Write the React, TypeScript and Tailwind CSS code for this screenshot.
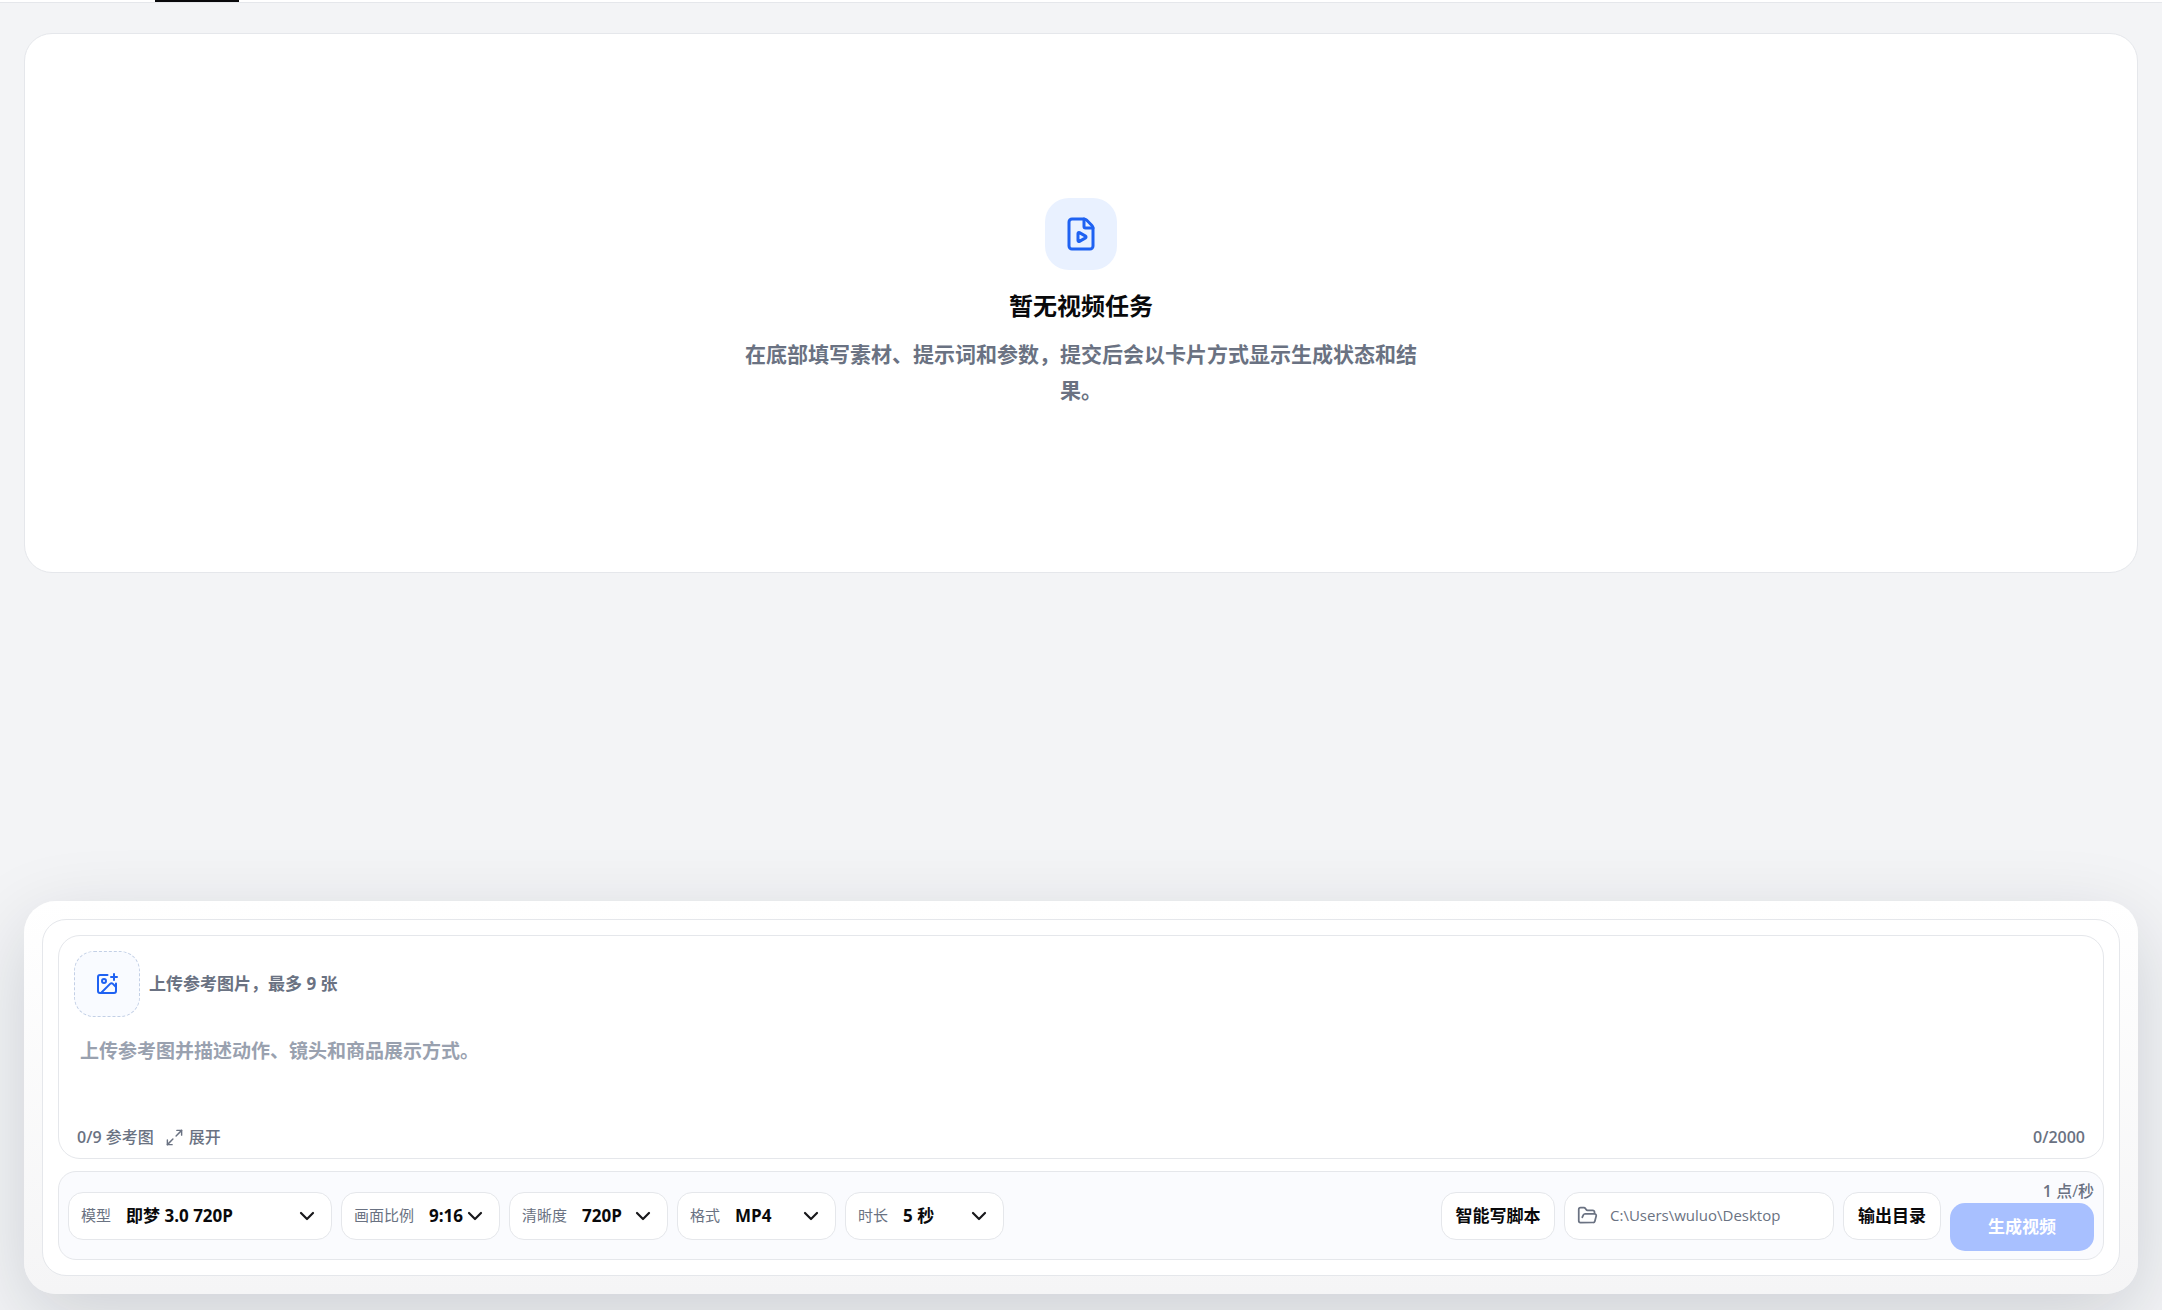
import React, { useState } from "react";
import {
  ChevronDown,
  FilePlay,
  FolderOpen,
  ImagePlus,
  Maximize2,
} from "lucide-react";

const MAX_IMAGES = 9;
const MAX_PROMPT = 2000;

const params = [
  {
    id: "model",
    label: "模型",
    width: "w-[264px]",
    options: ["即梦 3.0 720P", "即梦 3.0 1080P"],
  },
  {
    id: "ratio",
    label: "画面比例",
    width: "w-[159px]",
    options: ["9:16", "16:9", "1:1"],
  },
  {
    id: "quality",
    label: "清晰度",
    width: "w-[159px]",
    options: ["720P", "1080P"],
  },
  { id: "format", label: "格式", width: "w-[159px]", options: ["MP4"] },
  {
    id: "duration",
    label: "时长",
    width: "w-[159px]",
    options: ["5 秒", "10 秒"],
  },
];

type ParamProps = (typeof params)[number];

const ParamSelect = ({ id, label, width, options }: ParamProps) => (
  <div
    className={`flex h-12 items-center gap-[15px] rounded-[15px] border border-gray-200 bg-white px-3 ${width}`}
  >
    <label htmlFor={id} className="shrink-0 text-[15px] text-gray-500">
      {label}
    </label>
    <div className="relative flex min-w-0 flex-1 items-center">
      <select
        id={id}
        className="w-full appearance-none bg-transparent text-[17px] font-bold text-[#09090b] outline-none"
      >
        {options.map((option) => (
          <option key={option}>{option}</option>
        ))}
      </select>
      <ChevronDown
        className="pointer-events-none absolute right-0 size-6 text-[#18181b]"
        strokeWidth={2.2}
      />
    </div>
  </div>
);

const EmptyState = () => (
  <section className="flex min-h-[540px] flex-col items-center justify-center rounded-[28px] border border-gray-200 bg-white px-6 text-center">
    <div className="flex size-[72px] items-center justify-center rounded-3xl bg-[#e9f1ff]">
      <FilePlay className="size-9 text-[#1f62f2]" />
    </div>
    <h2 className="mt-[18px] text-2xl leading-9 font-bold text-[#09090b]">
      暂无视频任务
    </h2>
    <p className="mt-3 max-w-[680px] text-[21px] leading-9 font-bold text-gray-500">
      在底部填写素材、提示词和参数，提交后会以卡片方式显示生成状态和结果。
    </p>
  </section>
);

const Composer = () => {
  const [prompt, setPrompt] = useState("");

  return (
    <section className="rounded-[32px] bg-linear-to-b from-white to-[#f5f5f6] p-[18px] shadow-[0_24px_80px_rgba(15,23,42,0.16)]">
      <div className="flex flex-col gap-3 rounded-3xl border border-gray-200 bg-white p-[15px]">
        {/* Reference images and prompt */}
        <div className="rounded-[22px] border border-gray-200 bg-white px-[15px] pt-[15px] pb-[9px]">
          <label className="flex w-fit cursor-pointer items-center gap-[9px]">
            <input type="file" accept="image/*" multiple className="sr-only" />
            <span className="flex size-[66px] items-center justify-center rounded-[20px] border border-dashed border-[#c3d0e6] bg-[#f9fbff]">
              <ImagePlus className="size-6 text-[#1f62f2]" />
            </span>
            <span className="text-[17px] font-bold text-gray-500">
              上传参考图片，最多 9 张
            </span>
          </label>
          <textarea
            aria-label="提示词"
            value={prompt}
            maxLength={MAX_PROMPT}
            onChange={(e) => setPrompt(e.target.value)}
            placeholder="上传参考图并描述动作、镜头和商品展示方式。"
            className="mt-3 block h-[97px] w-full resize-none bg-transparent px-1.5 py-1.5 text-[19px] leading-8 font-bold text-[#09090b] outline-none placeholder:text-gray-400"
          />
          <div className="flex items-center gap-[11px] px-[3px] text-base leading-[23px] font-medium text-gray-500">
            <span>
              <span className="font-semibold">0/{MAX_IMAGES}</span> 参考图
            </span>
            <button type="button" className="flex items-center gap-[5px]">
              <Maximize2 className="size-[19px]" strokeWidth={1.8} />
              展开
            </button>
            <span className="ml-auto font-semibold">
              {prompt.length}/{MAX_PROMPT}
            </span>
          </div>
        </div>

        {/* Parameters and actions */}
        <div className="flex min-h-[89px] items-center justify-between gap-[9px] rounded-[18px] border border-gray-200 bg-[#fafbfe] px-[9px] py-2">
          <div className="flex items-center gap-[9px]">
            {params.map((param) => (
              <ParamSelect key={param.id} {...param} />
            ))}
          </div>
          <div className="flex items-center gap-[9px]">
            <button
              type="button"
              className="h-12 w-[114px] rounded-[15px] border border-gray-200 bg-white text-[17px] font-bold text-[#09090b]"
            >
              智能写脚本
            </button>
            <label className="flex h-12 w-[270px] items-center gap-3 rounded-[15px] border border-gray-200 bg-white px-3 text-gray-500">
              <FolderOpen className="size-[21px] shrink-0" strokeWidth={2} />
              <input
                readOnly
                aria-label="输出路径"
                value="C:\Users\wuluo\Desktop"
                className="w-full min-w-0 bg-transparent text-[15px] outline-none"
              />
            </label>
            <button
              type="button"
              className="h-12 w-[98px] rounded-[15px] border border-gray-200 bg-white text-[17px] font-bold text-[#09090b]"
            >
              输出目录
            </button>
            <div className="flex w-36 flex-col gap-0.5">
              <p className="text-right text-base leading-5 font-medium text-gray-500">
                <span className="font-semibold">1</span> 点/秒
              </p>
              <button
                type="button"
                disabled
                className="h-12 w-full rounded-[15px] bg-[#a8c0ff] text-[17px] font-bold text-white"
              >
                生成视频
              </button>
            </div>
          </div>
        </div>
      </div>
    </section>
  );
};

const App = () => (
  <div className="flex min-h-screen flex-col bg-[#f3f4f6] font-['Open_Sans','Noto_Sans_CJK_SC',sans-serif]">
    <header className="border-b border-gray-200 bg-white">
      <div className="ml-[155px] h-0.5 w-21 bg-[#09090b]" />
    </header>
    <main className="flex flex-1 flex-col justify-between gap-8 px-6 pt-[30px] pb-4">
      <EmptyState />
      <Composer />
    </main>
  </div>
);

export default App;
